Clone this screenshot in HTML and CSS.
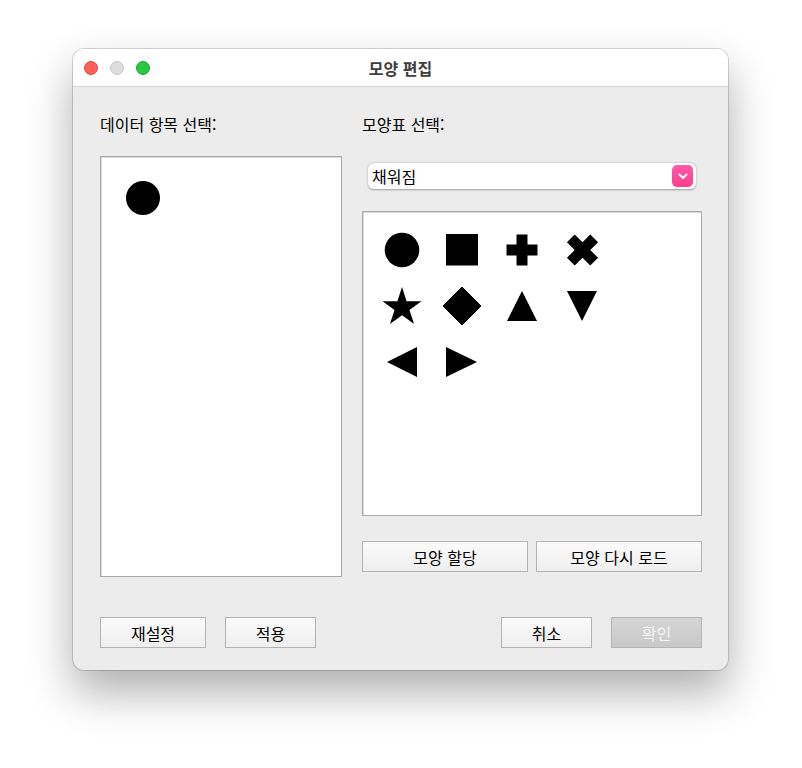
FILE: index.html
```html
<!DOCTYPE html>
<html lang="ko">
<head>
<meta charset="utf-8">
<title>모양 편집</title>
<link rel="stylesheet" href="styles.css">
</head>
<body>
<div class="window">
  <div class="titlebar">
    <div class="lights">
      <span class="light red"></span>
      <span class="light gray"></span>
      <span class="light green"></span>
    </div>
    <div class="title">모양 편집</div>
  </div>
  <div class="content">
    <div class="columns">
      <div class="col-left">
        <div class="label">데이터 항목 선택:</div>
        <div class="listbox">
          <svg class="item-shape" width="34" height="34" viewBox="0 0 34 34"><circle cx="17" cy="17" r="17" fill="#000"/></svg>
        </div>
      </div>
      <div class="col-right">
        <div class="label">모양표 선택:</div>
        <div class="select">
          <span class="select-text">채워짐</span>
          <span class="select-btn">
            <svg width="10" height="7" viewBox="0 0 10 7"><path d="M1.5 1.5 L5 5 L8.5 1.5" fill="none" stroke="#fff" stroke-width="2" stroke-linecap="round" stroke-linejoin="round"/></svg>
          </span>
        </div>
        <div class="shapebox">
          <div class="shapegrid">
            <div class="cell"><svg width="40" height="40" viewBox="0 0 40 40"><circle cx="20" cy="20" r="17.3"/></svg></div>
            <div class="cell"><svg width="40" height="40" viewBox="0 0 40 40"><rect x="4" y="4" width="32" height="31.5"/></svg></div>
            <div class="cell"><svg width="40" height="40" viewBox="0 0 40 40"><path d="M14.5 4.5 H25.5 V14.5 H35.5 V25.5 H25.5 V35.5 H14.5 V25.5 H4.5 V14.5 H14.5 Z"/></svg></div>
            <div class="cell"><svg width="40" height="40" viewBox="0 0 40 40"><g transform="translate(20.5 20) rotate(45)"><rect x="-5.5" y="-16.5" width="11" height="33"/><rect x="-16.5" y="-5.5" width="33" height="11"/></g></svg></div>
            <div class="cell"><svg width="40" height="40" viewBox="0 0 40 40"><polygon points="20,1 24.6,15.17 39.5,15.17 27.45,23.92 32.05,38.08 20,29.33 7.95,38.08 12.55,23.92 0.5,15.17 15.4,15.17"/></svg></div>
            <div class="cell"><svg width="40" height="40" viewBox="0 0 40 40"><polygon points="20,1 39,20 20,39 1,20" stroke="#000" stroke-width="1" stroke-linejoin="round"/></svg></div>
            <div class="cell"><svg width="40" height="40" viewBox="0 0 40 40"><polygon points="20,5 35,35 5,35"/></svg></div>
            <div class="cell"><svg width="40" height="40" viewBox="0 0 40 40"><polygon points="5,5 35,5 20,35"/></svg></div>
            <div class="cell"><svg width="40" height="40" viewBox="0 0 40 40"><polygon points="5,20 35,5 35,35"/></svg></div>
            <div class="cell"><svg width="40" height="40" viewBox="0 0 40 40"><polygon points="4,5 35,20 4,35"/></svg></div>
          </div>
        </div>
        <div class="btnrow">
          <button class="btn wide">모양 할당</button>
          <button class="btn wide">모양 다시 로드</button>
        </div>
      </div>
    </div>
    <div class="footer">
      <div class="group">
        <button class="btn reset">재설정</button>
        <button class="btn">적용</button>
      </div>
      <div class="group">
        <button class="btn">취소</button>
        <button class="btn disabled">확인</button>
      </div>
    </div>
  </div>
</div>
</body>
</html>
```

FILE: styles.css
```css
html, body {
  margin: 0;
  padding: 0;
  background: #ffffff;
}
body {
  min-height: 768px;
  font-family: "Noto Sans CJK KR", "Noto Sans", sans-serif;
  color: #000;
  padding-top: 49px;
  box-sizing: border-box;
}
.window {
  margin: 0 0 0 73px;
  width: 655px;
  height: 621px;
  border-radius: 11px;
  background: #ececec;
  box-shadow: 0 0 0 1px rgba(0,0,0,0.16), 0 22px 45px rgba(0,0,0,0.32);
  overflow: hidden;
  display: flex;
  flex-direction: column;
}
.titlebar {
  height: 37px;
  background: #ffffff;
  border-bottom: 1px solid #d6d6d6;
  display: flex;
  align-items: center;
  position: relative;
  flex-shrink: 0;
}
.lights {
  display: flex;
  gap: 12px;
  padding-left: 11px;
  padding-top: 1px;
}
.light {
  width: 14px;
  height: 14px;
  border-radius: 50%;
  box-sizing: border-box;
}
.light.red { background: #fe5f57; border: 0.5px solid #e2463f; }
.light.gray { background: #dddddd; border: 0.5px solid #c8c8c8; }
.light.green { background: #28c840; border: 0.5px solid #1aab29; }
.title {
  position: absolute;
  left: 0;
  right: 0;
  top: 0;
  bottom: 0;
  display: flex;
  align-items: center;
  justify-content: center;
  font-size: 16px;
  font-weight: 700;
  color: #3e3e3e;
  pointer-events: none;
}
.content {
  flex: 1;
  display: flex;
  flex-direction: column;
  padding: 27px 26px 22px 27px;
}
.columns {
  display: grid;
  grid-template-columns: 242px 340px;
  column-gap: 20px;
}
.label {
  font-size: 16px;
  font-weight: 400;
  line-height: 20px;
  height: 20px;
  color: #000;
}
.listbox {
  margin-top: 22px;
  height: 421px;
  box-sizing: border-box;
  background: #fff;
  border: 1px solid #a9a9a9;
  box-shadow: inset 1px 1px 0 #d8d8d8;
  padding: 24px 0 0 25px;
}
.item-shape {
  display: block;
}
.select {
  margin: 29px 6px 0 6px;
  height: 26px;
  background: #fff;
  border-radius: 6px;
  box-shadow: 0 0.5px 2px rgba(0,0,0,0.35);
  display: flex;
  align-items: center;
  justify-content: space-between;
  padding: 0 3px 0 4px;
}
.select-text {
  font-size: 16px;
  font-weight: 400;
  color: #000;
  line-height: 20px;
}
.select-btn {
  width: 21px;
  height: 22px;
  border-radius: 5px;
  background: linear-gradient(#ff5aa8, #ff3d8e);
  display: flex;
  align-items: center;
  justify-content: center;
}
.shapebox {
  margin-top: 22px;
  height: 305px;
  box-sizing: border-box;
  background: #fff;
  border: 1px solid #a9a9a9;
  box-shadow: inset 1px 1px 0 #d8d8d8;
  padding: 10px 0 0 9px;
}
.shapegrid {
  display: grid;
  grid-template-columns: repeat(4, 60px);
  grid-auto-rows: 56px;
}
.cell {
  display: flex;
  align-items: center;
  justify-content: center;
}
.cell svg {
  display: block;
  fill: #000;
}
.btnrow {
  margin-top: 25px;
  display: grid;
  grid-template-columns: 166px 166px;
  column-gap: 8px;
}
.btn {
  font-family: "Noto Sans CJK KR", "Noto Sans", sans-serif;
  font-size: 16px;
  font-weight: 400;
  color: #000;
  height: 31px;
  width: 91px;
  padding: 0;
  margin: 0;
  box-sizing: border-box;
  border: 1px solid #b3b3b3;
  background: linear-gradient(#fbfbfb, #efefef);
  border-radius: 0;
  line-height: 28px;
}
.btn.wide {
  width: 166px;
}
.btn.reset {
  width: 106px;
}
.btn.disabled {
  background: linear-gradient(#d6d6d6, #c8c8c8);
  border-color: #b4b4b4;
  color: #f6f6f6;
}
.footer {
  margin-top: auto;
  display: flex;
  justify-content: space-between;
}
.group {
  display: flex;
  gap: 19px;
}
```
